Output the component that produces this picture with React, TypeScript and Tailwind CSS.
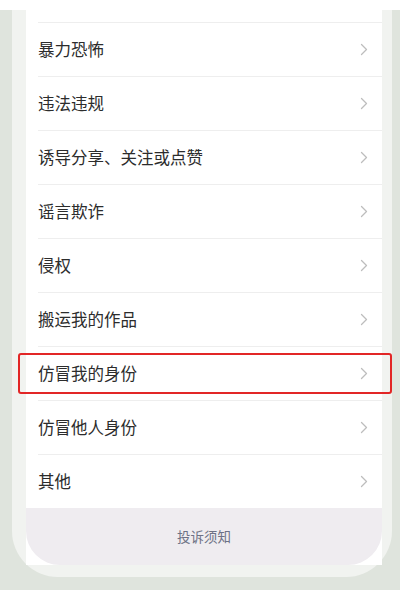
import React from "react";

const items = [
  "暴力恐怖",
  "违法违规",
  "诱导分享、关注或点赞",
  "谣言欺诈",
  "侵权",
  "搬运我的作品",
  "仿冒我的身份",
  "仿冒他人身份",
  "其他",
];

const Chevron = () => (
  <svg width="8" height="13" viewBox="0 0 8 13" fill="none" className="shrink-0">
    <path d="M1.5 1.5L6.5 6.5L1.5 11.5" stroke="#bdbdbd" strokeWidth="1.3" strokeLinecap="round" strokeLinejoin="round" />
  </svg>
);

const Row = ({ label, marked }: { label: string; marked?: boolean }) => (
  <div className="relative h-[54px] flex items-center justify-between pl-[12px] pr-[14px]">
    <div className="absolute top-0 left-[12px] right-0 h-px bg-[#eeeeee]" />
    <span className="text-[16.5px] text-[#2c2c2c]">{label}</span>
    <Chevron />
    {/* red annotation box */}
    {marked && (
      <div className="absolute left-[-8px] right-[-10px] top-[7px] bottom-[6px] border-2 border-[#e22626] rounded-[3px]" />
    )}
  </div>
);

export default function App() {
  return (
    <div
      className="w-[400px] h-[590px] bg-[#dfe4dd] flex flex-col overflow-hidden"
      style={{ fontFamily: '"Noto Sans CJK SC", "Noto Sans", sans-serif' }}
    >
      <div className="h-[10px] bg-white shrink-0" />
      <div className="ml-[12px] mr-[8px] bg-[#f1f3f0] pl-[14px] pr-[10px] pb-[12px] rounded-b-[46px]">
        <div className="bg-white">
          <div className="h-[12px]" />
          {items.map((label) => (
            <Row key={label} label={label} marked={label === "仿冒我的身份"} />
          ))}
          <div className="h-[57px] bg-[#efecf0] rounded-b-[34px] flex items-center justify-center">
            <span className="text-[13.5px] text-[#6d7185]">投诉须知</span>
          </div>
        </div>
      </div>
    </div>
  );
}
